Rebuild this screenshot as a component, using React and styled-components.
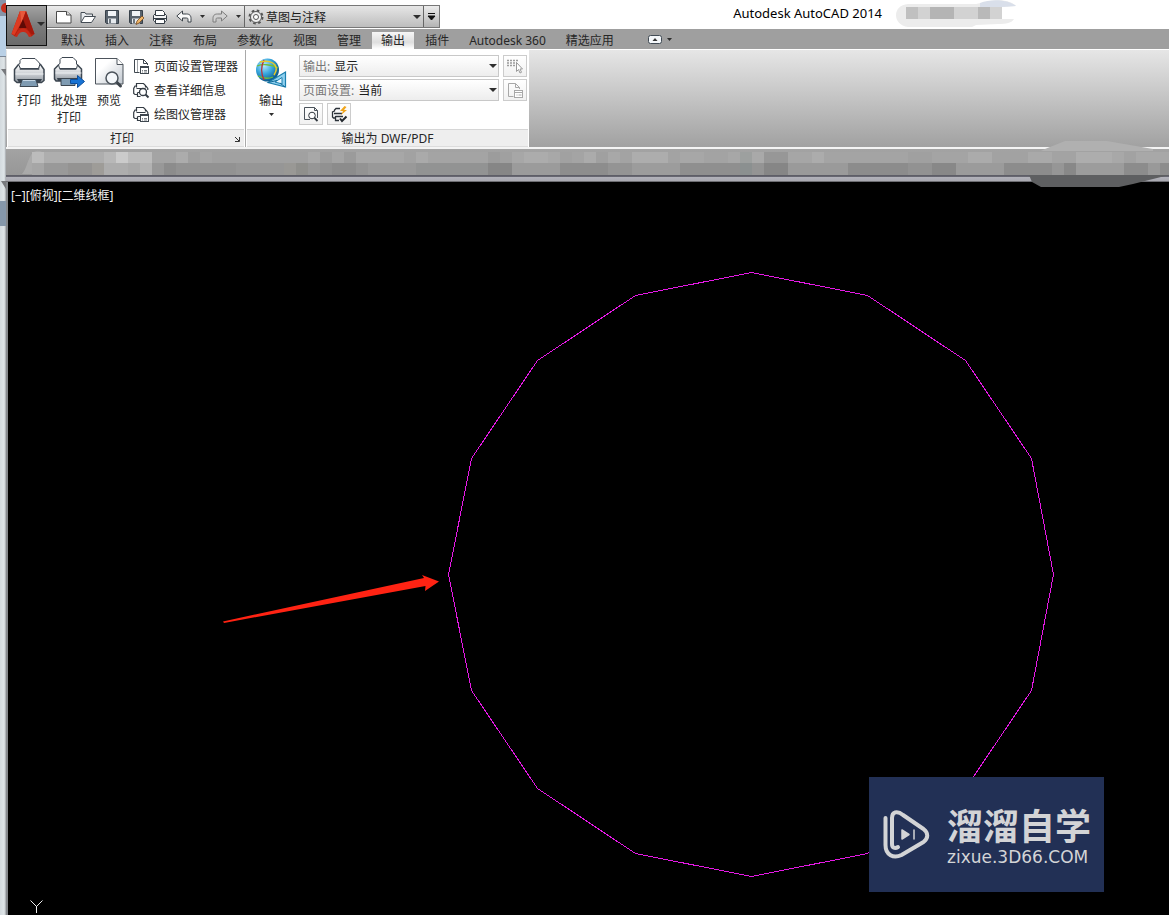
import styled, { createGlobalStyle, css } from 'styled-components'


const TABS = [
  '默认', '插入', '注释', '布局', '参数化', '视图', '管理', '输出', '插件', 'Autodesk 360', '精选应用',
]

const SIDES = [
  [751, 272], [867, 295], [965, 360], [1031, 458], [1053, 574], [1031, 690], [965, 788], [867, 853],
  [751, 876], [635, 853], [537, 788], [471, 690], [448, 574], [471, 458], [537, 360], [635, 295],
]

// [cells, shade], each cell is 12px wide
const UPPER = [
  [1, '#bcbcbc'], [5, '#aeaeae'], [1, '#b8b8b8'], [1, '#cbcbcb'], [2, '#bcbcbc'], [2, '#a4a4a4'],
  [1, '#acacac'], [1, '#9f9f9f'], [1, '#a5a5a5'], [8, '#a1a1a1'], [1, '#a8a8a8'], [1, '#9d9d9d'],
  [1, '#a5a5a5'], [1, '#9b9b9b'], [4, '#a7a7a7'], [1, '#a2a2a2'], [1, '#aaaaaa'], [5, '#a4a4a4'],
  [1, '#9c9c9c'], [1, '#a0a0a0'], [1, '#a7a7a7'], [2, '#acacac'], [1, '#a8a8a8'], [1, '#a1a1a1'],
  [1, '#a4a4a4'], [1, '#ababab'], [1, '#a0a0a0'], [1, '#a8a8a8'], [1, '#a3a3a3'], [3, '#adadad'],
  [1, '#a3a3a3'], [2, '#a7a7a7'], [2, '#a3a3a3'], [1, '#a7a7a7'], [1, '#9da09f'], [1, '#a9a9a9'],
  [2, '#979797'], [2, '#a6a6a6'], [1, '#acacac'], [7, '#a4a4a4'], [2, '#a0a0a0'], [3, '#a4a4a4'],
  [2, '#ababab'], [3, '#a2a2a2'], [2, '#a9a9a9'], [2, '#a3a3a3'], [3, '#adadad'], [1, '#a8a8a8'],
  [1, '#a2a2a2'], [3, '#a8a8a8'],
]

const LOWER = [
  [1, '#a6a6a6'], [2, '#999999'], [2, '#949392'], [1, '#9e9c98'], [2, '#adadad'],
  [1, '#a8a8a8'], [1, '#b2b2b2'], [1, '#989898'], [1, '#8c8c8c'], [5, '#929292'], [4, '#969696'],
  [1, '#999895'], [1, '#8f8f8c'], [1, '#969696'], [1, '#919191'], [2, '#8c8c8c'], [1, '#939393'],
  [4, '#999999'], [6, '#929393'], [2, '#868686'], [4, '#9b9b9b'], [4, '#8d8d8d'],
  [2, '#949494'], [4, '#9c9c9c'], [5, '#8f8f8f'], [1, '#8b9090'], [1, '#949494'], [2, '#868686'],
  [5, '#9a9a9a'], [5, '#8c8c8c'], [2, '#929292'], [2, '#888888'], [4, '#9b9b9b'], [4, '#8c8c8c'],
  [1, '#969696'], [1, '#888888'], [4, '#9c9c9c'], [2, '#8c8c8c'], [1, '#999999'], [3, '#8d8d8d'],
]


const Printer = ({ size = 32 }) => (
  <svg width = { size } height = { size } viewBox = "0 0 32 32">
    <defs>
      <linearGradient id = "metal" x1 = "0" y1 = "0" x2 = "0" y2 = "1">
        <stop offset = "0" stopColor = "#fff" />
        <stop offset = ".55" stopColor = "#c9cdd2" />
        <stop offset = "1" stopColor = "#8d949c" />
      </linearGradient>
    </defs>
    <path d = "M1.500 12.500l4-5h2V12h18V7.500h2l3.500 5v11l-2.500 2H4l-2.500-2z" fill = "url(#metal)" stroke = "#3c4650" strokeWidth = "1.500" />
    <path d = "M7.500 11.500l-2-4 1.500-1v-3l2-2h13l3.500 3.500 1.500 2-1.500 4.500z" fill = "#fff" stroke = "#3c4650" />
    <path d = "M2.500 17h28" stroke = "#eef0f2" />
    <path d = "M4 22h25l-2 3.500H6z" fill = "#39434e" />
    <path d = "M9 22.500h14l2 7H7z" fill = "#7f9bb2" stroke = "#3c4650" />
    <path d = "M10 23.500h12" stroke = "#c6d6e4" />
  </svg>
)

const QuickPrint = () => (
  <svg width = "16" height = "16" viewBox = "0 0 16 16">
    <path d = "M1.500 6.500L3 5h10l1.500 1.500v5l-1 1h-11l-1-1z" fill = "#f3f4f5" stroke = "#343c44" />
    <path d = "M3.500 6.500v-5h7l2 2v3z" fill = "#fff" stroke = "#343c44" />
    <path d = "M2 9.500h12" stroke = "#343c44" />
    <path d = "M3.500 10.500h9v4h-9z" fill = "#fff" stroke = "#343c44" />
  </svg>
)

const BatchPrinter = () => (
  <svg width = "32" height = "32" viewBox = "0 0 32 32">
    <path d = "M1.500 12l4-4h2v4h15V8h2l4 4v10l-2 2H3l-1.500-2z" fill = "url(#metal)" stroke = "#3c4650" strokeWidth = "1.500" />
    <path d = "M6.500 11.500l-1-4 1.500-1v-4l2-2h11l3.500 3.500v3l1 1-1 3.500z" fill = "#fff" stroke = "#3c4650" />
    <path d = "M2.500 16h26" stroke = "#eef0f2" />
    <path d = "M4 21h22v3H5z" fill = "#39434e" />
    <path d = "M8 21.500h14v7H8z" fill = "#7f9bb2" stroke = "#3c4650" />
    <path d = "M17.500 22.500h7v-4l7 6-7 6v-4h-7z" fill = "#1873d4" stroke = "#0c4e9c" />
  </svg>
)

const Preview = () => (
  <svg width = "32" height = "32" viewBox = "0 0 32 32">
    <defs>
      <linearGradient id = "sheet" x1 = "0" y1 = "0" x2 = "1" y2 = "1">
        <stop offset = ".3" stopColor = "#fff" />
        <stop offset = "1" stopColor = "#bfc6ce" />
      </linearGradient>
    </defs>
    <path d = "M2.500 1.500H24l6 6v19.500H2.500z" fill = "url(#sheet)" stroke = "#4d545c" />
    <path d = "M24 1.500v6h6" fill = "#fff" stroke = "#4d545c" />
    <path d = "M23.500 25l4 4" stroke = "#3d444b" strokeWidth = "3" strokeLinecap = "round" />
    <circle cx = "19" cy = "21" r = "6" fill = "#f4f7fa" stroke = "#4b535b" strokeWidth = "1.500" />
  </svg>
)

const Globe = () => (
  <svg width = "32" height = "32" viewBox = "0 0 32 32">
    <defs>
      <radialGradient id = "sea" cx = ".35" cy = ".3" r = ".75">
        <stop offset = "0" stopColor = "#b9ecff" />
        <stop offset = ".5" stopColor = "#36a5dc" />
        <stop offset = "1" stopColor = "#075183" />
      </radialGradient>
    </defs>
    <circle cx = "12.500" cy = "13" r = "11.500" fill = "url(#sea)" />
    <path d = "M2 9c5-2 14-2 21 2M3 19c6 3 10 3 15 1" stroke = "#6fbd3c" fill = "none" strokeWidth = "1.300" />
    <path d = "M9 3c-3 6-3 14 0 20" stroke = "#b5323b" fill = "none" strokeWidth = "1.500" />
    <path d = "M5 5c7-2 13 0 15 3s1 7-1 10" stroke = "#e8c928" fill = "none" strokeWidth = "1.500" />
    <path d = "M13 25.500L30.500 15v15z" fill = "#8fd0ef" stroke = "#1c7fae" strokeWidth = "1.200" />
    <path d = "M20 25l7-4.500v6.500z" fill = "#e9f8ff" stroke = "#1c7fae" />
    <path d = "M13 25.500l9-2M30 30l-5-4" stroke = "#126a98" />
  </svg>
)

const SheetManager = ({ tone = '#3f474f' }) => (
  <svg width = "17" height = "17" viewBox = "0 0 17 17">
    <path d = "M6.500 14.500h-5v-13h9l4 4v1.500M10.500 1.500v4h4" fill = "none" stroke = { tone } />
    <path d = "M4.500 2v12" fill = "none" stroke = { tone } opacity = ".5" />
    <rect x = "7.500" y = "8.500" width = "8" height = "7" fill = "#fff" stroke = { tone } />
    <path d = "M7.500 9h8" stroke = { tone } strokeWidth = "2" />
    <path d = "M9 12.500h1m1 0h3M9 14h1m1 0h3" stroke = { tone } opacity = ".7" />
  </svg>
)

const PageSetup = () => (
  <svg width = "17" height = "17" viewBox = "0 0 17 17" fill = "none" stroke = "#a8a8a8">
    <path d = "M6.500 14.500h-5v-13h7l4 4v1.500M8.500 1.500v4h4" />
    <rect x = "7.500" y = "8.500" width = "8" height = "7" fill = "#fff" />
    <path d = "M7.500 10.500h8M9.500 13h1m1 0h3" />
  </svg>
)

const PrinterDetails = ({ list }) => (
  <svg width = "17" height = "17" viewBox = "0 0 17 17">
    <path d = "M3.500 5.500v-4h7l2 2v2M3.500 4H2L.7 6.500v5L2 12.500h3M13 4l1.800 2.500V8M3.500 6.500h9M4.500 10.500h3M4.500 10.500v4h3" fill = "none" stroke = "#343c44" strokeWidth = "1.200" />
    { list ? (
      <g stroke = "#3f474f">
        <rect x = "7.500" y = "8.500" width = "8" height = "7" fill = "#fff" />
        <path d = "M7.500 9h8" strokeWidth = "2" />
        <path d = "M9 12.500h1m1 0h3M9 14h1m1 0h3" opacity = ".7" />
      </g>
    ) : (
      <g stroke = "#343c44">
        <path d = "M12.500 12.500l3 3" strokeWidth = "2" />
        <circle cx = "10" cy = "10" r = "3.500" fill = "#fff" strokeWidth = "1.300" />
      </g>
    ) }
  </svg>
)

const PickWindow = () => (
  <svg width = "18" height = "18" viewBox = "0 0 18 18">
    <path d = "M1 3.500h11M1 6h10M1 8.500h8" stroke = "#9c9c9c" strokeWidth = "1.500" strokeDasharray = "2 1" />
    <path d = "M10.500 5.500v9l2-2 1.500 3.500 1.500-.7-1.500-3.300h2.500z" fill = "#fff" stroke = "#9a9a9a" />
  </svg>
)

const SmallPreview = () => (
  <svg width = "16" height = "16" viewBox = "0 0 16 16">
    <path d = "M7 13.500H1.500v-12h10l3 3V12" fill = "none" stroke = "#4b535b" />
    <path d = "M11.500 1.500v3h3" fill = "none" stroke = "#4b535b" />
    <circle cx = "9" cy = "9.500" r = "3.300" fill = "#fff" stroke = "#2f363d" />
    <path d = "M11.500 12l3 3" stroke = "#2f363d" strokeWidth = "1.800" />
  </svg>
)

const PlotOptions = () => (
  <svg width = "17" height = "17" viewBox = "0 0 17 17">
    <path d = "M9 2.500H5L3.500 4v1.500M3.500 5L1.500 6v5l1 1H4M3 7.500h8M4.500 10v4.500H8M4.500 10.500H12" fill = "none" stroke = "#2a3138" strokeWidth = "1.300" />
    <path d = "M13.500 0L9 5h3l-2 4 6-5h-3l2.500-3z" fill = "#f0a51c" />
    <path d = "M9 12.500l2 2.500 4.500-4.500" fill = "none" stroke = "#22282e" strokeWidth = "2" />
  </svg>
)

const NewIcon = () => (
  <svg width = "16" height = "16" viewBox = "0 0 16 16">
    <path d = "M.5 2.500h10l4.500 3.500v8H.5z" fill = "#fff" stroke = "#4a4a4a" />
    <path d = "M10.500 2.500V6h4.500" fill = "#ddd" stroke = "#4a4a4a" />
  </svg>
)

const OpenIcon = () => (
  <svg width = "16" height = "16" viewBox = "0 0 16 16">
    <path d = "M1 13V3.500h4l1 1.500h6.500v2" fill = "#e7eaed" stroke = "#444c54" />
    <path d = "M1 13.500L4.500 7.500h11l-4 6z" fill = "#fff" stroke = "#444c54" />
  </svg>
)

const SaveIcon = ({ pencil }) => (
  <svg width = "16" height = "16" viewBox = "0 0 16 16">
    <path d = "M1.500 1.500h13v13h-12l-1-1z" fill = "#59636d" stroke = "#38414a" />
    <rect x = "4" y = "2" width = "8" height = "5" fill = "#f1f4f7" />
    <rect x = "4" y = "9.500" width = "8" height = "5" fill = "#e6eaee" />
    <path d = "M6 10v4" stroke = "#46505a" strokeWidth = "1.500" />
    { pencil && <path d = "M8 15.500l1-3.500 5-5 2 2-5 5z" fill = "#f1b76a" stroke = "#7a4b1e" strokeWidth = ".8" /> }
  </svg>
)

const UndoIcon = ({ flip }) => (
  <svg width = "16" height = "16" viewBox = "0 0 16 16">
    <path
      transform = { flip ? 'translate(16 0) scale(-1 1)' : undefined }
      d = "M.8 7L6.500 2v3h4c3.500 0 4.500 2 4.500 4.500V13h-3v-2.500C12 9.300 11.500 9 10.500 9h-4v3z"
      fill = { flip ? '#d2d2d2' : '#fafafa' }
      stroke = { flip ? '#7d7d7d' : '#3d444b' }
    />
  </svg>
)

const Gear = () => (
  <svg width = "16" height = "16" viewBox = "0 0 16 16" fill = "none" stroke = "#555">
    <circle cx = "8" cy = "8" r = "6.500" strokeWidth = "2" strokeDasharray = "2.600 2.500" />
    <circle cx = "8" cy = "8" r = "5.500" fill = "#eee" />
    <circle cx = "8" cy = "8" r = "2.500" fill = "#fff" />
  </svg>
)

const Caret = ({ wide }) => (
  <svg width = { wide ? 8 : 5 } height = { wide ? 4 : 3 } viewBox = "0 0 8 4" preserveAspectRatio = "none">
    <path d = "M0 0h8L4 4z" fill = "#2e2e2e" />
  </svg>
)

const AppLogo = () => (
  <svg width = "24" height = "28" viewBox = "0 0 24 28">
    <path d = "M9 1h6l8.500 23-3 2.500-5-6-3.500-1-3.500 1-4.500 6L.5 24z" fill = "#b5200f" />
    <path d = "M9 1L.5 24l3 1L10 13z" fill = "#dd3b22" />
    <path d = "M9 1h6l-3 8-2 4z" fill = "#e8583c" />
    <path d = "M15 1l-3 8 3.500 9 5 6 3 0z" fill = "#a3180c" />
    <path d = "M12 9l3.500 9H8z" fill = "#5e0a06" />
    <path d = "M4 26.500c2-6 5-8 8-8s6 2 8.500 8l-2.500.5c-2-4-3.500-5-6-5s-4 1-6 5z" fill = "#c92a18" />
  </svg>
)

const Cells = ({ runs, y, height }) => {

  let x = 0

  return runs.map(([count, fill], i) => {
    const left = x
    x += count * 12
    return <rect key = { i } x = { left } y = { y } width = { count * 12 } height = { height } fill = { fill } />
  })

}


const App = () => (
  <Page>
    <GlobalStyle />

    <Edge>
      <svg width = "6" height = "230">
        <rect width = "6" height = "16" fill = "#8794a8" />
        <circle cx = "6" cy = "8" r = "5" fill = "#c5301e" />
        <rect y = "16" width = "6" height = "40" fill = "#b9d0e6" />
        <path d = "M0 56.500h6" stroke = "#7a8696" />
        <path d = "M1 69h5v7zM1 181h5v8z" fill = "#77797d" />
        <rect y = "201" width = "6" height = "25" fill = "#8698ab" />
      </svg>
    </Edge>

    <Window>

      <Header>

        <AppButton aria-label = "AutoCAD">
          <AppLogo />
          <Caret wide />
        </AppButton>

        <TitleBar>
          <QuickAccess>
            <QuickButton aria-label = "新建"><NewIcon /></QuickButton>
            <QuickButton aria-label = "打开"><OpenIcon /></QuickButton>
            <QuickButton aria-label = "保存"><SaveIcon /></QuickButton>
            <QuickButton aria-label = "另存为"><SaveIcon pencil /></QuickButton>
            <QuickButton aria-label = "打印"><QuickPrint /></QuickButton>
            <QuickButton aria-label = "放弃"><UndoIcon /></QuickButton>
            <QuickButton $narrow aria-label = "放弃列表"><Caret /></QuickButton>
            <QuickButton aria-label = "重做"><UndoIcon flip /></QuickButton>
            <QuickButton $narrow aria-label = "重做列表"><Caret /></QuickButton>
            <Workspace>
              <Gear />
              <Select aria-label = "工作空间">
                <option>草图与注释</option>
              </Select>
              <Caret wide />
            </Workspace>
            <CustomizeButton aria-label = "自定义快速访问工具栏">
              <svg width = "9" height = "8" viewBox = "0 0 9 8">
                <path d = "M1 .500h7M1 3h7L4.500 7z" stroke = "#111" fill = "#111" />
              </svg>
            </CustomizeButton>
          </QuickAccess>

          <Title>Autodesk AutoCAD 2014</Title>

          <Smudge width = "122" height = "27">
            <path d = "M12 4h68l14-3c14-2 22 1 26 5l-14 1v12h12c-2 4-8 5-16 5l-22 1-4 2H12C-4 25-4 5 12 4z" fill = "#ececec" />
            <path d = "M84 3c12-5 30-3 36 3l-14 1H84z" fill = "#d9dfea" />
            <rect x = "10" y = "7" width = "96" height = "12" fill = "#d2d2d2" />
            <rect x = "10" y = "7" width = "12" height = "12" fill = "#c0c0c0" />
            <rect x = "34" y = "7" width = "24" height = "12" fill = "#b4b4b4" />
            <rect x = "82" y = "7" width = "12" height = "12" fill = "#b9b9b9" />
          </Smudge>
        </TitleBar>

        <Tabs>
          { TABS.map((name) => <Tab key = { name } $active = { name === '输出' }>{ name }</Tab>) }
          <MinimizeButton aria-label = "最小化功能区">
            <svg width = "14" height = "9" viewBox = "0 0 14 9">
              <rect x = ".5" y = ".5" width = "13" height = "8" rx = "2" fill = "#f4f7fa" stroke = "#414b55" />
              <path d = "M4.500 6L7 3l2.500 3z" fill = "#333" />
            </svg>
            <Caret />
          </MinimizeButton>
        </Tabs>

      </Header>

      <Ribbon>

        <Panel>
          <PanelBody>
            <LargeButton><Printer />打印</LargeButton>
            <LargeButton><BatchPrinter />批处理<br />打印</LargeButton>
            <LargeButton><Preview />预览</LargeButton>
            <ActionList>
              <Action><SheetManager />页面设置管理器</Action>
              <Action><PrinterDetails />查看详细信息</Action>
              <Action><PrinterDetails list />绘图仪管理器</Action>
            </ActionList>
          </PanelBody>
          <PanelTitle>
            <PanelName $beside>打印</PanelName>
            <Launcher aria-label = "打印选项">
              <svg width = "5" height = "5" viewBox = "0 0 5 5">
                <path d = "M0 0l4 4M4.500 0v4.500H0" stroke = "#333" fill = "none" />
              </svg>
            </Launcher>
          </PanelTitle>
        </Panel>

        <Panel>
          <PanelBody>
            <LargeButton $wide><Globe />输出<Caret /></LargeButton>
            <Fields>
              <Field>
                输出:
                <Select><option>显示</option></Select>
                <Caret wide />
              </Field>
              <SmallButton disabled aria-label = "选择窗口"><PickWindow /></SmallButton>
              <Field>
                页面设置:
                <Select><option>当前</option></Select>
                <Caret wide />
              </Field>
              <SmallButton disabled aria-label = "页面设置"><PageSetup /></SmallButton>
              <ButtonPair>
                <SmallButton aria-label = "预览"><SmallPreview /></SmallButton>
                <SmallButton aria-label = "输出选项"><PlotOptions /></SmallButton>
              </ButtonPair>
            </Fields>
          </PanelBody>
          <PanelTitle>
            <PanelName>输出为 DWF/PDF</PanelName>
          </PanelTitle>
        </Panel>

      </Ribbon>

      <FileStrip>
        <svg width = "1163" height = "26">
          <path d = "M16 25c4-4 5-12 9-19 4-6 11-5 13 0v19z" fill = "#b0b0b0" opacity = ".7" />
          <g transform = "translate(26 0)">
            <Cells runs = { UPPER } y = { 3 } height = { 11 } />
            <Cells runs = { LOWER } y = { 14 } height = { 12 } />
          </g>
        </svg>
        <StripPatch width = "144" height = "48">
          <path d = "M18 9L38 1h42l46 8v2H14z" fill = "#b0b0b0" />
          <path d = "M2 35h140L106 44 92 47H14L5 42z" fill = "#5e5f61" />
        </StripPatch>
      </FileStrip>

      <Canvas>
        <ViewLabel>[−][俯视][二维线框]</ViewLabel>
        <Drawing width = "1161" height = "733" viewBox = "8 182 1161 733">
          <polygon points = { SIDES.map(([x, y]) => `${x + 0.5},${y + 0.5}`).join(' ') } fill = "none" stroke = "#e619e6" shapeRendering = "crispEdges" />
          <path d = "M223 621.500L424 578l-2-3 17 6.500-14 9.500.5-5L224 623z" fill = "#ff2313" />
          <path d = "M30.500 900.500l6 6 6-6M36.500 906v7" fill = "none" stroke = "#eee" />
        </Drawing>
        <Badge>
          <svg width = "48" height = "52" viewBox = "0 0 48 52" fill = "none" stroke = "#d3d4d6" strokeLinecap = "round" strokeLinejoin = "round">
            <path d = "M2.500 9v27c0 10 8 14 16 10l22-13c5-4 5-9 0-13L20 6C14 1 9 3 9 9v26c0 4 3 5 6 3" strokeWidth = "4" />
            <path d = "M19 21v9l7-4.500z" fill = "#d3d4d6" strokeWidth = "1.500" />
            <path d = "M31 21v9" strokeWidth = "1.500" />
          </svg>
          <BadgeText>
            <BadgeName>溜溜自学</BadgeName>
            <BadgeSite>zixue.3D66.COM</BadgeSite>
          </BadgeText>
        </Badge>
      </Canvas>

    </Window>
  </Page>
)


const GlobalStyle = createGlobalStyle`
  * {
    box-sizing: border-box;
  }

  body {
    margin: 0;
    background: #000;
    font-family: "Noto Sans", "Noto Sans CJK SC", sans-serif;
    font-size: 12px;
    color: #262626;
  }

  button, select {
    font: inherit;
    color: inherit;
    margin: 0;
    padding: 0;
    border: 0;
    background: none;
  }

  svg {
    display: block;
    flex: none;
  }
`

const Page = styled.div`
  display: flex;
  min-height: 100vh;
`

const Edge = styled.aside`
  width: 6px;
  flex: none;
  background: linear-gradient(90deg, #d3dade, #dfe5e8 70%, #a0a4a8);
`

const Window = styled.main`
  flex: 1;
  min-width: 0;
  display: flex;
  flex-direction: column;
`

const Header = styled.header`
  display: grid;
  grid-template-columns: 41px 1fr;
  grid-template-rows: 29px 20px;
  background: linear-gradient(#fff 29px, #9f9f9f 29px);
`

const AppButton = styled.button`
  grid-row: 1 / 3;
  margin: 5px 0 3px;
  display: flex;
  align-items: center;
  gap: 2px;
  padding: 0 0 4px 4px;
  border: 1px solid #111;
  background: linear-gradient(#a2a2a2, #7b7b7b 50%, #6b6b6b);
`

const TitleBar = styled.div`
  display: flex;
  align-items: flex-start;
  white-space: nowrap;
`

const QuickAccess = styled.div`
  display: flex;
  align-items: stretch;
  height: 23px;
  margin-top: 5px;
  padding-left: 5px;
  border: 1px solid #777;
  border-left: 0;
  background: linear-gradient(#ececec, #b4b4b4);
`

const QuickButton = styled.button`
  width: ${ props => props.$narrow ? '12px' : '24px' };
  display: flex;
  align-items: center;
  justify-content: center;
`

const Workspace = styled.div`
  width: 180px;
  display: flex;
  align-items: center;
  gap: 2px;
  padding: 1px 2px 0 3px;
  border: solid #666;
  border-width: 0 1px;
  background: linear-gradient(#e6e6e6, #bdbdbd);
  color: #000;
`

const CustomizeButton = styled.button`
  width: 15px;
  display: flex;
  align-items: center;
  justify-content: center;
`

const Select = styled.select`
  flex: 1;
  min-width: 0;
  appearance: none;
  outline: none;
  color: #1c1c1c;
`

const Title = styled.h1`
  margin: 3px 0 0 auto;
  font-size: 13px;
  line-height: 20px;
  font-weight: 400;
  color: #000;
`

const Smudge = styled.svg`
  margin: 0 151px 0 14px;
`

const Tabs = styled.nav`
  display: flex;
  padding-left: 4px;
  white-space: nowrap;
`

const Tab = styled.button`
  padding: 4px 10px 0;
  line-height: 16px;

  ${ props => props.$active && css`
    margin: 3px 1px 0;
    padding: 1px 9px 0;
    background: linear-gradient(#f6f6f6, #dedede 60%, #fff);
  ` }
`

const MinimizeButton = styled.button`
  display: flex;
  align-items: center;
  gap: 5px;
  margin-left: 24px;
  padding-top: 1px;
`

const Ribbon = styled.section`
  display: flex;
  height: 100px;
  padding-left: 1px;
  border-top: 1px solid #fff;
  border-bottom: 2px solid #f4f4f4;
  background: linear-gradient(#e6e6e6, #a1a1a1);
`

const Panel = styled.section`
  display: flex;
  flex-direction: column;
  padding: 0 1px;
  background: #fff;

  & + & {
    border-left: 1px solid #a9a9a9;
  }
`

const PanelBody = styled.div`
  flex: 1;
  display: flex;
  align-items: flex-start;
  padding: 5px 1px 0;
`

const LargeButton = styled.button`
  width: ${ props => props.$wide ? '46px' : '40px' };
  display: flex;
  flex-direction: column;
  align-items: center;
  padding-top: 2px;
  line-height: 17px;
  white-space: nowrap;

  svg:first-child {
    margin-bottom: 3px;
  }

  svg + svg {
    margin-top: 4px;
  }
`

const ActionList = styled.div`
  display: flex;
  flex-direction: column;
  padding: 0 5px 0 4px;
`

const Action = styled.button`
  height: 24px;
  display: flex;
  align-items: center;
  gap: 4px;
  padding-bottom: 2px;
  white-space: nowrap;
`

const PanelTitle = styled.div`
  display: flex;
  align-items: center;
  height: 18px;
  border-top: 1px solid #d6d6d6;
  border-bottom: 1px solid #dcdcdc;
  background: #eee;
  line-height: 16px;
`

const PanelName = styled.span`
  flex: 1;
  padding: 2px 0 0 ${ props => props.$beside ? '3px' : '0' };
  text-align: center;
`

const Launcher = styled.button`
  width: 11px;
  padding: 2px 4px 0 2px;
`

const Fields = styled.div`
  display: grid;
  grid-template-columns: 200px 24px;
  gap: 2px 4px;
  margin-left: 5px;
`

const Field = styled.label`
  height: 22px;
  display: flex;
  align-items: center;
  gap: 4px;
  padding: 0 1px 0 3px;
  border: 1px solid #c8c8c8;
  background: linear-gradient(#fff, #ededed);
  color: #777;
  white-space: nowrap;
`

const SmallButton = styled.button`
  width: 24px;
  height: 22px;
  display: flex;
  align-items: center;
  justify-content: center;
  border: 1px solid #ccc;
  background: linear-gradient(#fff, #f1f1f1);
`

const ButtonPair = styled.div`
  display: flex;
  gap: 4px;
`

const FileStrip = styled.div`
  position: relative;
  height: 33px;
  background: linear-gradient(#a3a3a3 0, #979797 26px, #5a5a62 26px, #6b6b75 28px, #b2b2ba 28px, #a8a8b0 32px, #6d6d72 32px);

  > svg:first-child {
    max-width: 100%;
  }
`

const StripPatch = styled.svg`
  position: absolute;
  top: -9px;
  right: -2px;
  z-index: 1;
`

const Canvas = styled.section`
  position: relative;
  flex: 1;
  min-height: 320px;
  overflow: hidden;
  border-left: 2px solid #85888c;
  background: #000;
`

const ViewLabel = styled.div`
  padding: 5px 3px;
  line-height: 18px;
  color: #f2f2f2;
`

const Drawing = styled.svg`
  position: absolute;
  top: 0;
  left: 0;
`

const Badge = styled.div`
  position: absolute;
  right: 65px;
  bottom: 23px;
  width: 235px;
  height: 115px;
  display: flex;
  align-items: center;
  gap: 16px;
  padding-left: 14px;
  background: #223055;
  color: #d3d4d6;
`

const BadgeText = styled.div`
  display: flex;
  flex-direction: column;
  white-space: nowrap;
`

const BadgeName = styled.strong`
  font-size: 36px;
  line-height: 44px;
  font-weight: 700;
`

const BadgeSite = styled.span`
  font-family: "DejaVu Sans", sans-serif;
  font-size: 17px;
  line-height: 16px;
`

export default App
